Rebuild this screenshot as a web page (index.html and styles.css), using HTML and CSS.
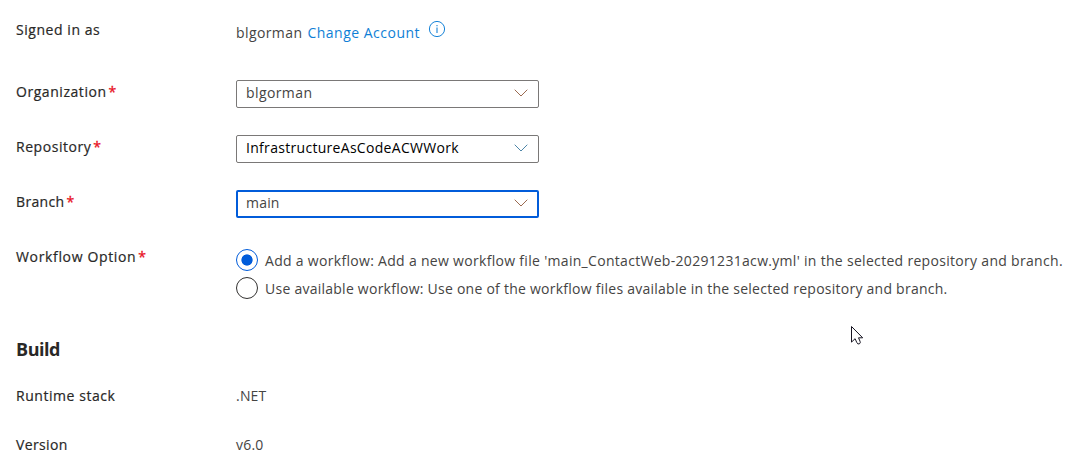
FILE: index.html
```html
<!DOCTYPE html>
<html lang="en">
<head>
<meta charset="utf-8">
<title>Deployment settings</title>
<link rel="stylesheet" href="styles.css">
</head>
<body>
<main class="form">
  <div class="row row-account">
    <div class="label"><span class="t-signed">Signed in as</span></div>
    <div class="account"><span class="user">blgorman</span><a class="link">Change Account</a>
      <svg class="info" width="18" height="18" viewBox="0 0 18 18"><circle cx="9" cy="9" r="7.6" fill="none" stroke="#1683d8"/><path d="M9 7.5V13M9 5v1.3" stroke="#1683d8" stroke-width="1.1"/></svg>
    </div>
  </div>
  <div class="row">
    <div class="label"><span class="t-org">Organization</span><span class="req">*</span></div>
    <div class="select"><span class="user">blgorman</span><svg class="chev chev-warm" width="14" height="8" viewBox="0 0 14 8"><path d="M.7.7 7 7 13.3.7"/></svg></div>
  </div>
  <div class="row">
    <div class="label"><span class="t-repo">Repository</span><span class="req">*</span></div>
    <div class="select select-dark"><span class="t-infra">InfrastructureAsCodeACWWork</span><svg class="chev chev-cool" width="14" height="8" viewBox="0 0 14 8"><path d="M.7.7 7 7 13.3.7"/></svg></div>
  </div>
  <div class="row">
    <div class="label"><span class="t-branch">Branch</span><span class="req">*</span></div>
    <div class="select select-focus"><span class="t-main">main</span><svg class="chev chev-warm" width="14" height="8" viewBox="0 0 14 8"><path d="M.7.7 7 7 13.3.7"/></svg></div>
  </div>
  <div class="row row-options">
    <div class="label"><span class="t-option">Workflow Option</span><span class="req">*</span></div>
    <div class="options">
      <div class="option"><span class="radio radio-on"></span><span class="t-add">Add a workflow: Add a new workflow file 'main_ContactWeb-20291231acw.yml' in the selected repository and branch.</span></div>
      <div class="option"><span class="radio"></span><span class="t-use">Use available workflow: Use one of the workflow files available in the selected repository and branch.</span></div>
    </div>
  </div>
  <h2 class="heading">Build</h2>
  <div class="row row-info">
    <div class="label"><span class="t-stack">Runtime stack</span></div>
    <div class="value"><span class="t-net">.NET</span></div>
  </div>
  <div class="row row-info">
    <div class="label"><span class="t-version">Version</span></div>
    <div class="value"><span class="t-v6">v6.0</span></div>
  </div>
</main>
<svg class="cursor" width="14" height="21" viewBox="0 0 14 21"><path d="M1.5 1.5v15.6l3.6-3.4 1.6 3.6q1 2.4 2.6 1.6t.7-2.7l-1.5-3.4h4.2z" fill="#fff" stroke="#171522"/></svg>
</body>
</html>
```
FILE: styles.css
```css
body {
  margin: 0;
  background: #fff;
  color: #454443;
  font: 400 14px/20px "Open Sans", "Noto Sans", sans-serif;
  white-space: nowrap;
  overflow: hidden;
}
.form { height: 472px; padding-left: 16px; box-sizing: border-box; }
.row { display: grid; grid-template-columns: 220px 1fr; align-items: start; height: 55px; }
.row-account { height: 60px; padding-top: 20px; }
.row-options { height: 90px; }
.row-info { height: 49px; }
.label { display: flex; padding-top: 2px; color: #292827; letter-spacing: .55px; }
.label span:first-child { -webkit-text-stroke: .2px #292827; }
.row-account .label, .row-info .label { padding-top: 0; }
.req { color: #e81123; margin-left: 2px; -webkit-text-stroke: .3px #e81123; }
.t-branch, .t-version { letter-spacing: .35px; }
.t-option { letter-spacing: .65px; }
.t-net, .t-v6 { letter-spacing: .2px; }
.account { display: flex; padding-top: 3px; }
.user { letter-spacing: .4px; }
.link { color: #0f7fd6; margin-left: 5px; letter-spacing: .5px; }
.info { margin: -3px 0 0 8px; }
.select {
  display: flex; justify-content: space-between; box-sizing: border-box;
  width: 303px; height: 28px; padding: 2px 10px 0 9px;
  border: 1px solid #7a7877; border-radius: 2px;
}
.select-dark { color: #000; letter-spacing: .3px; }
.select-focus { border: 2px solid #015cda; padding: 1px 9px 0 8px; }
.t-main { letter-spacing: .2px; }
.chev { margin-top: 6px; fill: none; }
.chev-warm { stroke: #9a6a50; }
.chev-cool { stroke: #4e86a8; }
.options { display: grid; grid-auto-rows: 28px; padding-top: 1px; }
.option { display: flex; align-items: center; gap: 7px; }
.t-add, .t-use { padding-top: 1px; }
.t-add { letter-spacing: .305px; }
.t-use { letter-spacing: .25px; }
.radio { box-sizing: border-box; width: 22px; height: 22px; border: 1px solid #323130; border-radius: 50%; }
.radio-on { border-color: #015cda; background: radial-gradient(circle, #015cda 5.2px, transparent 6px); }
.heading { margin: 2px 0 0; height: 49px; font-size: 18px; line-height: 24px; font-weight: 700; letter-spacing: -.45px; color: #292827; }
.cursor { position: absolute; left: 850px; top: 325px; }
```
